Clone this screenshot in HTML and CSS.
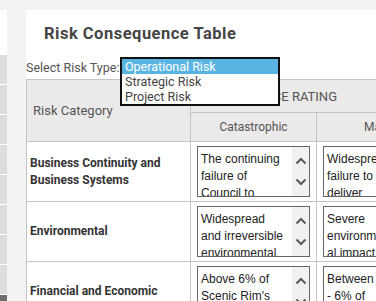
FILE: index.html
```html
<!DOCTYPE html>
<html>
<head>
<meta charset="utf-8">
<link rel="stylesheet" href="styles.css">
</head>
<body>
<div class="page">
  <aside class="sidebar">
    <div class="side-top"></div>
    <div class="side-item"></div>
    <div class="side-item"></div>
    <div class="side-item"></div>
    <div class="side-item"></div>
    <div class="side-item"></div>
    <div class="side-item"></div>
    <div class="side-item"></div>
    <div class="side-item"></div>
    <div class="side-item dark"></div>
  </aside>
  <div class="gutter"></div>
  <main class="panel">
    <h1 class="title">Risk Consequence Table</h1>
    <div class="type-row">
      <span class="type-label">Select Risk Type:</span>
      <div class="select-wrap">
        <ul class="listbox">
          <li class="opt selected">Operational Risk</li>
          <li class="opt">Strategic Risk</li>
          <li class="opt">Project Risk</li>
        </ul>
      </div>
    </div>
    <table class="ctable">
      <colgroup>
        <col class="c-cat"><col class="c-r"><col class="c-r"><col class="c-r"><col class="c-r"><col class="c-r">
      </colgroup>
      <thead>
        <tr class="h1">
          <th rowspan="2" class="th-cat">Risk Category</th>
          <th colspan="5" class="th-group">CONSEQUENCE RATING</th>
        </tr>
        <tr class="h2">
          <th class="th-r">Catastrophic</th>
          <th class="th-r">Major</th>
          <th class="th-r">Moderate</th>
          <th class="th-r">Minor</th>
          <th class="th-r">Insignificant</th>
        </tr>
      </thead>
      <tbody>
        <tr>
          <td class="cat">Business Continuity and Business Systems</td>
          <td><div class="tbox"><div class="tbox-text">The continuing failure of Council to deliver essential services</div><div class="sbar"><svg width="12" height="8" viewBox="0 0 12 8"><path d="M1.5 6.5 L6 2 L10.5 6.5" fill="none" stroke="#5a5a5a" stroke-width="2"/></svg><svg width="12" height="8" viewBox="0 0 12 8"><path d="M1.5 1.5 L6 6 L10.5 1.5" fill="none" stroke="#5a5a5a" stroke-width="2"/></svg></div></div></td>
          <td><div class="tbox"><div class="tbox-text narrow">Widespread failure to deliver essential services</div><div class="sbar"><svg width="12" height="8" viewBox="0 0 12 8"><path d="M1.5 6.5 L6 2 L10.5 6.5" fill="none" stroke="#5a5a5a" stroke-width="2"/></svg><svg width="12" height="8" viewBox="0 0 12 8"><path d="M1.5 1.5 L6 6 L10.5 1.5" fill="none" stroke="#5a5a5a" stroke-width="2"/></svg></div></div></td>
          <td></td><td></td><td></td>
        </tr>
        <tr>
          <td class="cat">Environmental</td>
          <td><div class="tbox"><div class="tbox-text">Widespread and irreversible environmental damage</div><div class="sbar"><svg width="12" height="8" viewBox="0 0 12 8"><path d="M1.5 6.5 L6 2 L10.5 6.5" fill="none" stroke="#5a5a5a" stroke-width="2"/></svg><svg width="12" height="8" viewBox="0 0 12 8"><path d="M1.5 1.5 L6 6 L10.5 1.5" fill="none" stroke="#5a5a5a" stroke-width="2"/></svg></div></div></td>
          <td><div class="tbox"><div class="tbox-text narrow">Severe environmental impact</div><div class="sbar"><svg width="12" height="8" viewBox="0 0 12 8"><path d="M1.5 6.5 L6 2 L10.5 6.5" fill="none" stroke="#5a5a5a" stroke-width="2"/></svg><svg width="12" height="8" viewBox="0 0 12 8"><path d="M1.5 1.5 L6 6 L10.5 1.5" fill="none" stroke="#5a5a5a" stroke-width="2"/></svg></div></div></td>
          <td></td><td></td><td></td>
        </tr>
        <tr>
          <td class="cat">Financial and Economic</td>
          <td><div class="tbox"><div class="tbox-text">Above 6% of Scenic Rim's annual budget</div><div class="sbar"><svg width="12" height="8" viewBox="0 0 12 8"><path d="M1.5 6.5 L6 2 L10.5 6.5" fill="none" stroke="#5a5a5a" stroke-width="2"/></svg><svg width="12" height="8" viewBox="0 0 12 8"><path d="M1.5 1.5 L6 6 L10.5 1.5" fill="none" stroke="#5a5a5a" stroke-width="2"/></svg></div></div></td>
          <td><div class="tbox"><div class="tbox-text narrow">Between 4% - 6% of Scenic Rim's annual budget</div><div class="sbar"><svg width="12" height="8" viewBox="0 0 12 8"><path d="M1.5 6.5 L6 2 L10.5 6.5" fill="none" stroke="#5a5a5a" stroke-width="2"/></svg><svg width="12" height="8" viewBox="0 0 12 8"><path d="M1.5 1.5 L6 6 L10.5 1.5" fill="none" stroke="#5a5a5a" stroke-width="2"/></svg></div></div></td>
          <td></td><td></td><td></td>
        </tr>
      </tbody>
    </table>
  </main>
</div>
</body>
</html>
```

FILE: styles.css
```css
html, body {
  margin: 0;
  padding: 0;
}
body {
  background: #f3f3f3;
  font-family: Roboto, "Liberation Sans", sans-serif;
  color: #444;
  overflow: hidden;
}
.page {
  display: grid;
  grid-template-columns: 7px 19px 1fr;
  padding-top: 10px;
  height: 291px;
}
.sidebar {
  display: flex;
  flex-direction: column;
  gap: 1px;
  background: #fff;
  overflow: hidden;
}
.side-top {
  height: 44px;
  flex: none;
}
.side-item {
  height: 29px;
  flex: none;
  background: #dcdcdc;
}
.side-item.dark {
  background: #6e6e6e;
}
.panel {
  background: #fff;
  overflow: hidden;
  min-width: 0;
}
.title {
  margin: 0;
  padding: 9px 0 0 18px;
  height: 37px;
  font-size: 16.5px;
  letter-spacing: 0.5px;
  font-weight: 700;
  line-height: 30px;
  color: #454545;
  white-space: nowrap;
}
.type-row {
  display: flex;
  align-items: center;
  height: 23px;
}
.type-label {
  font-size: 12.5px;
  color: #555;
  width: 94px;
}
.select-wrap {
  position: relative;
  width: 160px;
  height: 20px;
}
.listbox {
  position: absolute;
  z-index: 2;
  left: 0;
  top: -1px;
  margin: 0;
  padding: 0;
  list-style: none;
  width: 156px;
  border: 2px solid #111;
  background: #fff;
}
.opt {
  height: 15px;
  line-height: 15px;
  font-size: 12.5px;
  padding-left: 3px;
  color: #444;
}
.opt.selected {
  background: #5ab4e2;
  color: #fff;
}
.ctable {
  border-collapse: collapse;
  table-layout: fixed;
  width: 794px;
  border: 1px solid #c4c4c4;
}
.c-cat { width: 164px; }
.c-r { width: 126px; }
.ctable th, .ctable td {
  border: 1px solid #c4c4c4;
  padding: 0;
}
.ctable thead th {
  background: #ebe9e9;
  font-weight: 400;
  color: #555;
  font-size: 13px;
}
.h1 { height: 33px; }
.h2 { height: 29px; }
.th-cat {
  text-align: left;
  padding-left: 6px !important;
}
.th-group {
  text-align: left;
  padding-left: 6px !important;
}
.th-r {
  text-align: center;
  font-size: 12px !important;
}
.ctable tbody tr { height: 59px; }
.cat {
  font-weight: 700;
  font-size: 12px;
  line-height: 17px;
  color: #333;
  padding: 0 3px !important;
}
.ctable tbody td:not(.cat) {
  padding: 4px 6px 4px 6px;
  vertical-align: top;
}
.tbox {
  display: flex;
  width: 111px;
  height: 49px;
  border: 1px solid #666;
  overflow: hidden;
  background: #fff;
}
.tbox-text {
  flex: 1;
  min-width: 0;
  padding: 4px 7px 0 3px;
  font-family: "Liberation Sans", Arial, sans-serif;
  font-size: 12px;
  line-height: 17px;
  color: #222;
  overflow: hidden;
  overflow-wrap: anywhere;
}
.tbox-text.narrow {
  padding-right: 19px;
}
.sbar {
  flex: none;
  width: 17px;
  background: #f1f1f1;
  display: flex;
  flex-direction: column;
  align-items: center;
  justify-content: space-between;
  padding: 10px 0 10px;
}
.sbar svg { display: block; }
```
